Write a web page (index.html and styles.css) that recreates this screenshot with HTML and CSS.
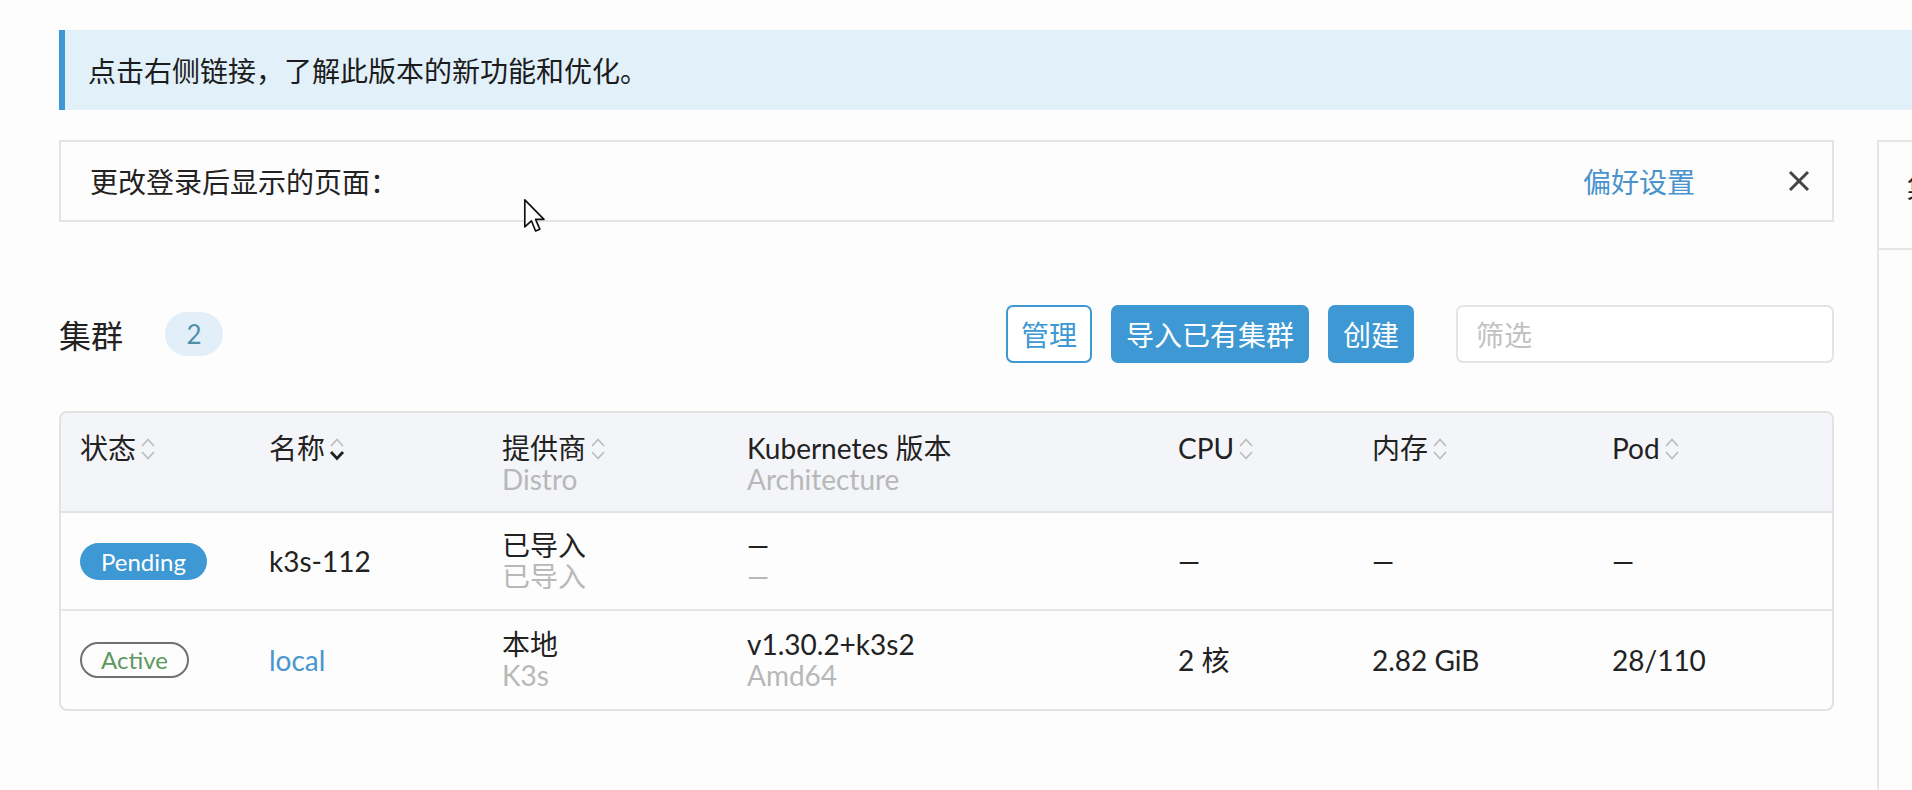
FILE: index.html
```html
<!DOCTYPE html>
<html lang="zh-CN">
<head>
    <meta charset="UTF-8">
    <title>集群</title>
    <link rel="stylesheet" href="styles.css">
</head>
<body>
    <div class="page">
        <div class="banner">点击右侧链接，了解此版本的新功能和优化。</div>

        <div class="layout">
            <div class="main">
                <div class="pref">
                    <span class="pref-text">更改登录后显示的页面：</span>
                    <a class="pref-link" href="#">偏好设置</a>
                    <svg class="close" width="24" height="24" viewBox="0 0 24 24">
                        <path d="M3 3 L21 21 M21 3 L3 21" stroke="#444" stroke-width="3" fill="none"/>
                    </svg>
                </div>

                <div class="title-row">
                    <h1 class="title">集群</h1>
                    <span class="count">2</span>
                    <div class="actions">
                        <button class="btn btn-outline">管理</button>
                        <button class="btn">导入已有集群</button>
                        <button class="btn">创建</button>
                    </div>
                    <div class="filter">筛选</div>
                </div>

                <div class="table">
                    <div class="row thead">
                        <div class="th"><span class="label">状态<svg class="sort" viewBox="0 0 18 26"><path d="M3 10 L9 3.5 L15 10" /><path d="M3 16 L9 22.5 L15 16" /></svg></span></div>
                        <div class="th"><span class="label">名称<svg class="sort" viewBox="0 0 18 26"><path d="M3 10 L9 3.5 L15 10" /><path class="on" d="M3 16 L9 22.5 L15 16" /></svg></span></div>
                        <div class="th"><span class="label">提供商<svg class="sort" viewBox="0 0 18 26"><path d="M3 10 L9 3.5 L15 10" /><path d="M3 16 L9 22.5 L15 16" /></svg></span><span class="sub">Distro</span></div>
                        <div class="th"><span class="label">Kubernetes 版本</span><span class="sub">Architecture</span></div>
                        <div class="th"><span class="label">CPU<svg class="sort" viewBox="0 0 18 26"><path d="M3 10 L9 3.5 L15 10" /><path d="M3 16 L9 22.5 L15 16" /></svg></span></div>
                        <div class="th"><span class="label">内存<svg class="sort" viewBox="0 0 18 26"><path d="M3 10 L9 3.5 L15 10" /><path d="M3 16 L9 22.5 L15 16" /></svg></span></div>
                        <div class="th"><span class="label">Pod<svg class="sort" viewBox="0 0 18 26"><path d="M3 10 L9 3.5 L15 10" /><path d="M3 16 L9 22.5 L15 16" /></svg></span></div>
                    </div>

                    <div class="row tr">
                        <div class="td"><span class="state pending">Pending</span></div>
                        <div class="td">k3s-112</div>
                        <div class="td"><span>已导入</span><span class="sub">已导入</span></div>
                        <div class="td"><span class="dash">—</span><span class="dash sub">—</span></div>
                        <div class="td"><span class="dash">—</span></div>
                        <div class="td"><span class="dash">—</span></div>
                        <div class="td"><span class="dash">—</span></div>
                    </div>

                    <div class="row tr last">
                        <div class="td"><span class="state active">Active</span></div>
                        <div class="td"><a class="link" href="#">local</a></div>
                        <div class="td"><span>本地</span><span class="sub">K3s</span></div>
                        <div class="td"><span>v1.30.2+k3s2</span><span class="sub">Amd64</span></div>
                        <div class="td">2 核</div>
                        <div class="td">2.82 GiB</div>
                        <div class="td">28/110</div>
                    </div>
                </div>
            </div>

            <div class="side">
                <div class="side-head">集群</div>
            </div>
        </div>
    </div>

    <svg class="cursor" width="24" height="36" viewBox="0 0 20 30">
        <path d="M1.5 1.5 L1.5 24 L7 19 L10.5 27.5 L14 26 L10.5 17.8 L17.5 17.8 Z" fill="#fff" stroke="#111" stroke-width="1.4" stroke-linejoin="round"/>
    </svg>
</body>
</html>
```

FILE: styles.css
```css
body, html {
    margin: 0;
    padding: 0;
    height: 100%;
    background-color: #fdfdfd;
    font-family: Lato, "Noto Sans CJK SC", sans-serif;
    font-size: 28px;
    color: #222;
    overflow: hidden;
}
.page {
    padding: 30px 0 0 59px;
}
.banner {
    height: 80px;
    box-sizing: border-box;
    border-left: 6px solid #3d98d3;
    background-color: #e1f0f9;
    padding-left: 23px;
    display: flex;
    align-items: center;
    color: #1c1c1c;
}
.layout {
    display: flex;
    margin-top: 30px;
}
.main {
    width: 1775px;
    flex-shrink: 0;
}
.side {
    margin-left: 43px;
    flex: 1;
    height: 650px;
    border-left: 2px solid #e6e6e6;
    border-top: 2px solid #e6e6e6;
    overflow: hidden;
}
.side-head {
    height: 108px;
    box-sizing: border-box;
    border-bottom: 2px solid #e6e6e6;
    padding: 24px 0 0 28px;
    white-space: nowrap;
}
.pref {
    height: 82px;
    box-sizing: border-box;
    border: 2px solid #e4e4e4;
    display: flex;
    align-items: center;
    padding: 0 21px 0 29px;
}
.pref-text {
    flex: 1;
}
.pref-link {
    color: #4a93cc;
    text-decoration: none;
    margin-right: 92px;
}
.close {
    display: block;
}
.title-row {
    display: flex;
    align-items: center;
    height: 58px;
    margin-top: 83px;
}
.title {
    margin: 0;
    font-size: 32px;
    font-weight: normal;
}
.count {
    margin-left: 42px;
    width: 58px;
    height: 44px;
    border-radius: 22px;
    background-color: #e3eff8;
    color: #4f8faa;
    font-size: 26px;
    display: flex;
    align-items: center;
    justify-content: center;
}
.actions {
    margin-left: auto;
    display: flex;
    gap: 19px;
}
.btn {
    height: 58px;
    padding: 0 13px;
    border: 2px solid #3d98d3;
    border-radius: 7px;
    background-color: #3d98d3;
    color: #fff;
    font-family: inherit;
    font-size: 28px;
}
.btn-outline {
    background-color: #fff;
    color: #3d98d3;
}
.filter {
    margin-left: 42px;
    width: 378px;
    height: 58px;
    box-sizing: border-box;
    border: 2px solid #e4e4e4;
    border-radius: 7px;
    padding-left: 18px;
    display: flex;
    align-items: center;
    color: #c2c2c2;
    background-color: #fff;
}
.table {
    margin-top: 48px;
    border: 2px solid #e2e2e2;
    border-radius: 8px;
    overflow: hidden;
    background-color: #fdfdfd;
}
.row {
    display: grid;
    grid-template-columns: 189px 233px 245px 431px 194px 240px 1fr;
    padding-left: 19px;
    box-sizing: border-box;
    line-height: 31px;
}
.thead {
    height: 100px;
    padding-top: 20px;
    background-color: #f4f5f9;
    border-bottom: 2px solid #e2e2e2;
}
.th, .td {
    display: flex;
    flex-direction: column;
}
.tr {
    height: 98px;
    align-items: center;
    border-bottom: 2px solid #e6e6e6;
}
.tr.last {
    border-bottom: none;
}
.label {
    display: flex;
    align-items: center;
    white-space: nowrap;
}
.sort {
    width: 18px;
    height: 26px;
    margin-left: 3px;
    fill: none;
    stroke: #bdbdbd;
    stroke-width: 1.7;
}
.sort .on {
    stroke: #222;
    stroke-width: 2.8;
}
.sub {
    color: #b8b8b8;
}
.dash {
    align-self: flex-start;
}
.state {
    align-self: flex-start;
    box-sizing: border-box;
    font-size: 24px;
    border-radius: 19px;
}
.pending {
    height: 37px;
    line-height: 37px;
    padding: 0 21px;
    background-color: #3d98d3;
    color: #fff;
}
.active {
    height: 36px;
    line-height: 32px;
    padding: 0 19px;
    border: 2px solid #707070;
    color: #5d995d;
}
.link {
    color: #4a95cf;
    text-decoration: none;
}
.cursor {
    position: absolute;
    left: 523px;
    top: 198px;
}
```
